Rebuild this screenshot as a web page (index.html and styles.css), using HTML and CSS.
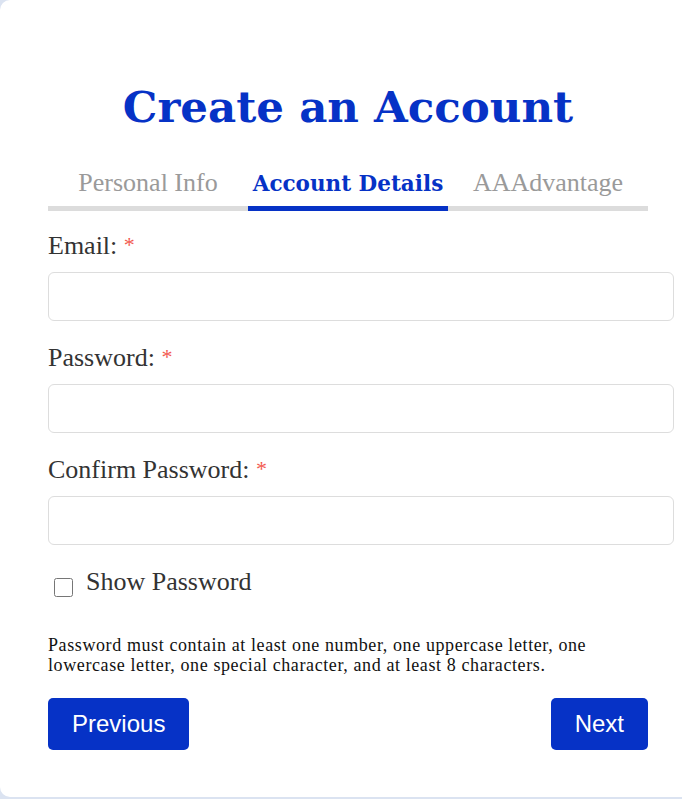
FILE: index.html
```html
<!DOCTYPE html>
<html lang="en">
<head>
<meta charset="utf-8">
<title>Create an Account</title>
<link rel="stylesheet" href="styles.css">
</head>
<body>
<div class="card">
  <h1 class="title">Create an Account</h1>
  <div class="tabs">
    <div class="tab">Personal Info</div>
    <div class="tab active">Account Details</div>
    <div class="tab">AAAdvantage</div>
  </div>
  <form class="form">
    <div class="group">
      <label class="label" for="email">Email: <span class="req">*</span></label>
      <input class="input" id="email" type="email">
    </div>
    <div class="group">
      <label class="label" for="pw">Password: <span class="req">*</span></label>
      <input class="input" id="pw" type="password">
    </div>
    <div class="group">
      <label class="label" for="pw2">Confirm Password: <span class="req">*</span></label>
      <input class="input" id="pw2" type="password">
    </div>
    <div class="show-row">
      <input class="check" id="show" type="checkbox">
      <label class="show-label" for="show">Show Password</label>
    </div>
    <p class="hint">Password must contain at least one number, one uppercase letter, one lowercase letter, one special character, and at least 8 characters.</p>
    <div class="actions">
      <button type="button" class="btn">Previous</button>
      <button type="button" class="btn">Next</button>
    </div>
  </form>
</div>
</body>
</html>
```

FILE: styles.css
```css
html, body {
  margin: 0;
  padding: 0;
}
body {
  background: #dbe3f1;
  overflow: hidden;
  height: 799px;
}
.card {
  background: #ffffff;
  width: 600px;
  padding: 78px 48px 47px 48px;
  border-radius: 10px;
}
.title {
  margin: 0 0 33px 0;
  font-family: "DejaVu Serif", serif;
  font-weight: bold;
  font-size: 43.5px;
  line-height: 58px;
  text-align: center;
  color: #0632c6;
}
.tabs {
  display: flex;
  margin-bottom: 20px;
}
.tab {
  width: 200px;
  text-align: center;
  white-space: nowrap;
  font-family: "Liberation Serif", serif;
  font-size: 26px;
  line-height: 28px;
  padding-bottom: 9px;
  color: #9a9a9a;
  border-bottom: 5px solid #dcdcdc;
}
.tab.active {
  font-family: "DejaVu Serif", serif;
  font-weight: bold;
  font-size: 21.5px;
  padding-top: 1px;
  padding-bottom: 8px;
  color: #0632c6;
  border-bottom-color: #0632c6;
}
.form {
  margin: 0;
}
.group {
  margin-bottom: 22px;
}
.label {
  display: block;
  height: 30px;
  font-family: "Liberation Serif", serif;
  font-size: 26px;
  line-height: 30px;
  color: #333333;
  margin-bottom: 11px;
}
.req {
  color: #f25a50;
  font-size: 22px;
  line-height: 0;
  vertical-align: 2px;
}
.input {
  display: block;
  box-sizing: content-box;
  width: 600px;
  height: 23px;
  padding: 12px;
  margin: 0;
  border: 1px solid #dddddd;
  border-radius: 6px;
  font-size: 16px;
  background: #ffffff;
  outline: none;
}
.show-row {
  display: flex;
  align-items: flex-start;
}
.check {
  width: 19px;
  height: 19px;
  margin: 11px 13px 0 6px;
}
.show-label {
  font-family: "Liberation Serif", serif;
  font-size: 26px;
  line-height: 30px;
  color: #333333;
}
.hint {
  margin: 38px 0 0 0;
  font-family: "Liberation Serif", serif;
  font-size: 18px;
  letter-spacing: 0.6px;
  line-height: 20px;
  color: #111111;
}
.actions {
  display: flex;
  justify-content: space-between;
  margin-top: 23px;
}
.btn {
  font-family: "Liberation Sans", Arial, sans-serif;
  font-size: 24px;
  line-height: 28px;
  padding: 12px 24px;
  border: none;
  border-radius: 5px;
  background: #0632c6;
  color: #ffffff;
  cursor: pointer;
}
```
